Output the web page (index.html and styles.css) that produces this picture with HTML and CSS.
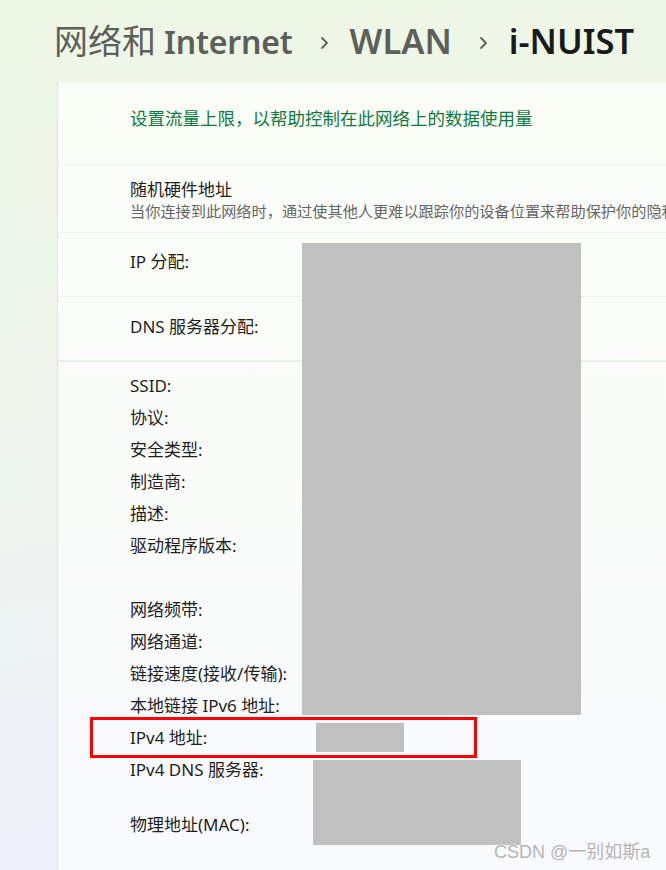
FILE: index.html
```html
<!DOCTYPE html>
<html lang="zh-CN">
<head>
    <meta charset="UTF-8">
    <meta name="viewport" content="width=device-width, initial-scale=1.0">
    <title>i-NUIST</title>
    <link rel="stylesheet" href="styles.css">
</head>
<body>
    <div class="page">
        <!-- Breadcrumb title -->
        <h1 class="title">
            <span class="crumb"><span class="cjk">网络和</span> Internet</span>
            <svg class="chev" width="9" height="14" viewBox="0 0 9 14"><path d="M2 2 L7 7 L2 12" fill="none" stroke="#5f625d" stroke-width="1.8" stroke-linecap="round" stroke-linejoin="round"/></svg>
            <span class="crumb wide">WLAN</span>
            <svg class="chev" width="9" height="14" viewBox="0 0 9 14"><path d="M2 2 L7 7 L2 12" fill="none" stroke="#5f625d" stroke-width="1.8" stroke-linecap="round" stroke-linejoin="round"/></svg>
            <span class="crumb wide current">i-NUIST</span>
        </h1>

        <div class="panel">
            <div class="row limit">
                <span class="link">设置流量上限，以帮助控制在此网络上的数据使用量</span>
            </div>

            <div class="row random">
                <div class="row-title">随机硬件地址</div>
                <div class="row-desc">当你连接到此网络时，通过使其他人更难以跟踪你的设备位置来帮助保护你的隐私</div>
            </div>

            <div class="row single ip">IP 分配:</div>
            <div class="row single dns">DNS 服务器分配:</div>

            <!-- Properties list -->
            <ul class="props">
                <li>SSID:</li>
                <li>协议:</li>
                <li>安全类型:</li>
                <li>制造商:</li>
                <li>描述:</li>
                <li>驱动程序版本:</li>
                <li></li>
                <li>网络频带:</li>
                <li>网络通道:</li>
                <li>链接速度(接收/传输):</li>
                <li>本地链接 IPv6 地址:</li>
                <li>IPv4 地址:</li>
                <li class="two-lines">IPv4 DNS 服务器:</li>
                <li>物理地址(MAC):</li>
            </ul>
        </div>

        <!-- Redacted values and annotation -->
        <div class="mask mask-main"></div>
        <div class="mask mask-ipv4"></div>
        <div class="mask mask-dns"></div>
        <div class="highlight"></div>
        <div class="watermark">CSDN @一别如斯a</div>
    </div>
</body>
</html>
```

FILE: styles.css
```css
html, body {
    margin: 0;
    padding: 0;
    height: 870px;
    overflow: hidden;
}

body {
    font-family: "Noto Sans", "Noto Sans CJK SC", sans-serif;
    background: linear-gradient(172deg, #eef7e5 0%, #eff5ec 40%, #eef2f6 75%, #eef1f9 100%);
    color: #1b1b1b;
}

.page {
    position: relative;
    height: 870px;
    display: flex;
    flex-direction: column;
}

.title {
    margin: 0;
    height: 82px;
    padding: 0 0 0 54px;
    box-sizing: border-box;
    display: flex;
    align-items: center;
    align-self: flex-start;
    font-size: 32px;
    font-weight: 600;
    letter-spacing: -0.2px;
    line-height: 48px;
    white-space: nowrap;
}

.cjk {
    font-size: 34px;
    font-weight: 400;
    letter-spacing: 0;
}

.crumb {
    color: #5c5f5a;
}

.crumb.wide {
    font-size: 34.5px;
    letter-spacing: 0;
}

.crumb.current {
    color: #1a1a1a;
}

.chev {
    margin: 4px 21px 0 27px;
}

.panel {
    flex: 1;
    margin-left: 57px;
    border-left: 1px solid #dfe5de;
    background: linear-gradient(180deg, #fbfdf7 0%, #fafcf9 45%, #f9fafd 100%);
    overflow: hidden;
}

.row {
    padding-left: 72px;
    border-bottom: 1px solid #ebf1e8;
    white-space: nowrap;
}

.limit {
    height: 83px;
    padding-top: 24px;
    box-sizing: border-box;
}

.link {
    color: #0f7a3e;
    font-size: 17.5px;
    line-height: 24px;
}

.random {
    height: 68px;
    padding-top: 14px;
    box-sizing: border-box;
}

.row-title {
    font-size: 17px;
    line-height: 22px;
    color: #1f1f1f;
}

.row-desc {
    font-size: 15.2px;
    line-height: 20px;
    color: #666;
}

.single {
    font-size: 17px;
    line-height: 24px;
    color: #1f1f1f;
    box-sizing: border-box;
}

.ip {
    height: 64px;
    padding-top: 17px;
}

.dns {
    height: 65px;
    padding-top: 18px;
    border-bottom: 2px solid #e6f1e5;
}

.props {
    list-style: none;
    margin: 0;
    padding: 8px 0 0 72px;
}

.props li {
    height: 32px;
    line-height: 32px;
    font-size: 17px;
    color: #1f1f1f;
    white-space: nowrap;
}

.props li.two-lines {
    margin-bottom: 23px;
}

.mask {
    position: absolute;
    background-color: #c0c0c0;
}

.mask-main {
    left: 302px;
    top: 243px;
    width: 279px;
    height: 472px;
}

.mask-ipv4 {
    left: 316px;
    top: 723px;
    width: 88px;
    height: 29px;
}

.mask-dns {
    left: 313px;
    top: 760px;
    width: 208px;
    height: 85px;
}

.highlight {
    position: absolute;
    left: 90px;
    top: 717px;
    width: 381px;
    height: 35px;
    border: 3px solid #ff0000;
}

.watermark {
    position: absolute;
    left: 494px;
    top: 840px;
    font-family: "Liberation Sans", "Noto Sans CJK SC", sans-serif;
    font-size: 18px;
    line-height: 24px;
    color: #b4b4b4;
    text-shadow: 0 0 2px #ffffff;
    white-space: nowrap;
}
```
